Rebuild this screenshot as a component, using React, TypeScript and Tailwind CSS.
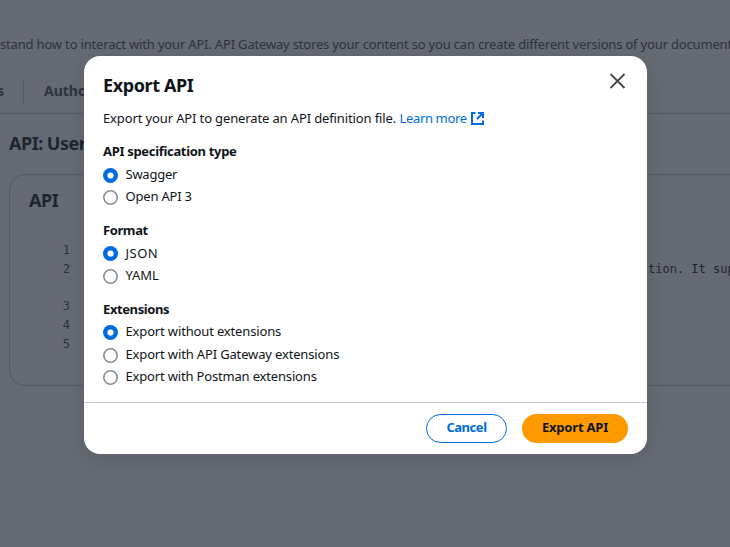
const Radio = ({
  label,
  checked,
  spacing,
  height,
  leading = "leading-[19px]",
}: {
  label: string;
  checked?: boolean;
  spacing: string;
  height: string;
  leading?: string;
}) => (
  <label className={`flex items-start ${height}`}>
    <svg className="mt-[3px] h-[15px] w-[15px] shrink-0" viewBox="0 0 15 15">
      {checked ? (
        <>
          <circle cx="7.5" cy="7.5" r="7.5" fill="#006ce0" />
          <circle cx="7.5" cy="7.5" r="3.1" fill="#fff" />
        </>
      ) : (
        <circle cx="7.5" cy="7.5" r="6.7" fill="#fff" stroke="#8c8c94" strokeWidth="1.6" />
      )}
    </svg>
    <span className={`ml-[7.5px] text-[13px] whitespace-nowrap ${leading} ${spacing}`}>{label}</span>
  </label>
);

const GroupTitle = ({ children, height, spacing }: { children: string; height: string; spacing: string }) => (
  <h3 className={`text-[13px] leading-[19px] font-bold whitespace-nowrap ${height} ${spacing}`}>{children}</h3>
);

const CodeLine = ({ number, text, height }: { number: number; text?: string; height: string }) => (
  <div className={`flex leading-[19px] ${height}`}>
    <span className="w-[60px] shrink-0 text-right text-[#424650]">{number}</span>
    <span className="ml-[578px] whitespace-pre">{text}</span>
  </div>
);

function Page() {
  return (
    <div className="flex h-full w-full flex-col overflow-hidden bg-white text-[#0f141a]">
      <p className="mt-[35px] h-[19px] text-[13px] leading-[19px] tracking-[-0.175px] whitespace-nowrap text-[#424650]">
        stand how to interact with your API. API Gateway stores your content so you can create different versions of your documentation
      </p>
      <div className="mt-[15px] flex h-[45px] border-b border-[#c6c6cd] pt-[10px] text-[14px] font-bold text-[#424650]">
        <span className="w-[23px] leading-[24px]">
          <span className="-ml-[3px]">s</span>
        </span>
        <span className="h-[26px] w-px bg-[#c6c6cd]" />
        <span className="ml-[20px] leading-[24px]">Author</span>
      </div>
      <h1 className="mt-[16px] ml-[9px] h-[27px] text-[18px] leading-[26px] font-bold tracking-[-0.5px]">API: Users</h1>
      <section className="mt-[17px] ml-[9px] h-[212px] w-[760px] rounded-2xl border border-[#c6c6cd]">
        <h2 className="mt-[12px] ml-[19px] h-[27px] text-[18px] leading-[26px] font-bold tracking-[-0.5px]">API</h2>
        <div className="mt-[27px] font-['DejaVu_Sans_Mono',monospace] text-[12px]">
          <CodeLine number={1} height="h-[19px]" />
          <CodeLine number={2} text="tion. It supports" height="h-[37px]" />
          <CodeLine number={3} height="h-[19px]" />
          <CodeLine number={4} height="h-[19px]" />
          <CodeLine number={5} height="h-[19px]" />
        </div>
      </section>
    </div>
  );
}

export default function App() {
  return (
    <main className="relative h-[547px] w-[730px] overflow-hidden font-['Noto_Sans','Open_Sans',sans-serif]">
      <Page />
      <div className="absolute inset-0 bg-[#232b37]/70">
        <div
          role="dialog"
          className="mt-[56px] ml-[84px] flex h-[398px] w-[563px] flex-col rounded-2xl bg-white text-[#0f141a] shadow-[0_4px_20px_1px_rgba(0,7,22,0.1)]"
        >
          <header className="flex h-[53px] shrink-0 items-start justify-between pt-[16px] pr-[21px] pl-[19px]">
            <h2 className="text-[18px] leading-[26px] font-bold tracking-[-0.38px]">Export API</h2>
            <svg className="h-[17px] w-[17px]" viewBox="0 0 17 17" fill="none" stroke="#424650" strokeWidth="1.8">
              <path d="M1.5 2l14 14M15.5 2l-14 14" />
            </svg>
          </header>
          <div className="flex-1 pl-[19px]">
            <div className="flex h-[33px] text-[13px] leading-[19px] whitespace-nowrap">
              <span className="w-[296.500px] tracking-[-0.13px]">Export your API to generate an API definition file.</span>
              <a className="flex text-[#006ce0]">
                <span className="w-[68px] tracking-[-0.35px]">Learn more</span>
                <svg className="mt-[2px] ml-[2.5px] h-[15px] w-[15px]" viewBox="0 0 15 15" fill="none" stroke="currentColor" strokeWidth="2">
                  <path d="M5.5 2H2v11h11V9.500M8 2h5v5M13 2L7 8" />
                </svg>
              </a>
            </div>
            <GroupTitle height="h-[23px]" spacing="tracking-[-0.32px]">API specification type</GroupTitle>
            <Radio checked label="Swagger" spacing="tracking-[-0.25px]" height="h-[22px]" />
            <Radio label="Open API 3" spacing="tracking-[-0.2px]" height="h-[34px]" />
            <GroupTitle height="h-[22px]" spacing="tracking-[-0.4px]">Format</GroupTitle>
            <Radio checked label="JSON" spacing="tracking-[0.5px]" height="h-[23px]" leading="leading-[21px]" />
            <Radio label="YAML" spacing="tracking-[-0.1px]" height="h-[34px]" />
            <GroupTitle height="h-[22px]" spacing="tracking-[-0.4px]">Extensions</GroupTitle>
            <Radio checked label="Export without extensions" spacing="tracking-[-0.15px]" height="h-[23px]" />
            <Radio label="Export with API Gateway extensions" spacing="tracking-[-0.15px]" height="h-[22px]" />
            <Radio label="Export with Postman extensions" spacing="tracking-[-0.17px]" height="h-[22px]" />
          </div>
          <footer className="flex h-[52px] shrink-0 justify-end gap-[15px] border-t border-[#c6c6cd] pt-[11px] pr-[19px] text-[13px] font-bold">
            <button className="flex h-[29px] w-[81px] justify-center rounded-full border-[1.5px] border-[#006ce0] leading-[25px] tracking-[-0.45px] text-[#006ce0]">
              Cancel
            </button>
            <button className="flex h-[29px] w-[106px] justify-center rounded-full bg-[#ff9900] leading-[27px] tracking-[-0.2px]">
              Export API
            </button>
          </footer>
        </div>
      </div>
    </main>
  );
}
